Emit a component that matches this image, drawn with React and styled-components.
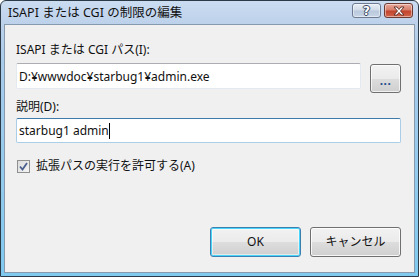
import React from "react";
import styled, { createGlobalStyle } from "styled-components";

const FONT = `"Noto Sans", "Noto Sans CJK JP", sans-serif`;

const Global = createGlobalStyle`
  html, body { margin: 0; padding: 0; background: #ffffff; }
  body { font-family: ${FONT}; }
`;

const Window = styled.div`
  width: 419px;
  height: 277px;
  box-sizing: border-box;
  border: 1px solid #2c3a48;
  border-radius: 6px 6px 0 0;
  background: linear-gradient(to bottom, #cbdcf1 0px, #bcd1ea 24px, #a9cbea 60px, #7fc9ef 100%);
  display: flex;
  flex-direction: column;
  padding: 0 3px 3px 3px;
  font-family: ${FONT};
`;

const TitleBar = styled.div`
  height: 23px;
  display: flex;
  align-items: center;
  padding-left: 4px;
  padding-right: 2px;
`;

const Title = styled.div`
  flex: 1;
  font-size: 12.5px;
  color: #111;
  line-height: 16px;
  margin-top: 1px;
`;

const CapButton = styled.div`
  width: 29px;
  height: 15px;
  margin-left: ${(p) => (p.$close ? 3 : 0)}px;
  margin-top: -4px;
  border: 1px solid ${(p) => (p.$close ? "#6b3b33" : "#6c7b92")};
  border-radius: 3px;
  box-sizing: border-box;
  background: ${(p) =>
    p.$close
      ? "linear-gradient(to bottom, #e9ab9e 0%, #d77e6b 45%, #c2442d 55%, #d0644a 100%)"
      : "linear-gradient(to bottom, #e8eef6 0%, #d2dce9 45%, #b9c8dc 55%, #c9d6e6 100%)"};
  display: flex;
  align-items: center;
  justify-content: center;
  box-shadow: inset 0 0 0 1px rgba(255, 255, 255, 0.45);
`;

const Panel = styled.div`
  flex: 1;
  background: #f0f0f0;
  border: 1px solid #8799ad;
  display: flex;
  flex-direction: column;
  padding: 0 13px 0 11px;
`;

const Label = styled.div`
  font-size: 12px;
  line-height: 16px;
  color: #111;
  margin-top: ${(p) => p.$top}px;
`;

const Row = styled.div`
  display: flex;
  align-items: flex-start;
  margin-top: ${(p) => p.$top}px;
`;

const TextBox = styled.div`
  flex: 1;
  height: ${(p) => p.$h}px;
  box-sizing: border-box;
  background: #fff;
  border: 1px solid ${(p) => (p.$focus ? "#aacde8" : "#e3e9ef")};
  border-top-color: ${(p) => (p.$focus ? "#3d7bad" : "#abadb3")};
  border-radius: 2px;
  font-size: 12px;
  color: #111;
  padding-left: 2px;
  display: flex;
  align-items: center;
  white-space: nowrap;
`;

const Caret = styled.span`
  display: inline-block;
  width: 1px;
  height: 16px;
  background: #000;
`;

const Browse = styled.button`
  width: 31px;
  height: 29px;
  margin-left: 9px;
  margin-top: 1px;
  box-sizing: border-box;
  border: 1px solid #707070;
  border-radius: 3px;
  background: linear-gradient(to bottom, #f2f2f2 0%, #ebebeb 50%, #dddddd 51%, #cfcfcf 100%);
  box-shadow: inset 0 0 0 1px rgba(255, 255, 255, 0.7);
  padding: 3px 0 0 0;
  display: flex;
  align-items: center;
  justify-content: center;
  color: #1c4c8c;
  font-family: "Noto Sans", sans-serif;
  font-size: 12px;
  font-weight: bold;
  letter-spacing: 0.5px;
`;

const CheckRow = styled.div`
  display: flex;
  align-items: center;
  margin-top: 15px;
  margin-left: 1px;
`;

const CheckBox = styled.div`
  width: 13px;
  height: 13px;
  box-sizing: border-box;
  border: 1px solid #8e8f8f;
  background: linear-gradient(135deg, #dcdcdc 0%, #f4f4f4 100%);
  display: flex;
  align-items: center;
  justify-content: center;
`;

const CheckLabel = styled.div`
  font-size: 12px;
  line-height: 16px;
  color: #111;
  margin-left: 6px;
`;

const Footer = styled.div`
  margin-top: auto;
  margin-bottom: 15px;
  display: flex;
  justify-content: flex-end;
  gap: 9px;
`;

const DlgButton = styled.button`
  width: 91px;
  height: 30px;
  box-sizing: border-box;
  border: 1px solid ${(p) => (p.$default ? "#3c7fb1" : "#707070")};
  border-radius: 3px;
  background: linear-gradient(to bottom, #f2f2f2 0%, #ebebeb 50%, #dddddd 51%, #cfcfcf 100%);
  box-shadow: ${(p) =>
    p.$default
      ? "inset 0 0 0 1px #48d5f9, inset 0 0 0 2px rgba(255,255,255,0.5)"
      : "inset 0 0 0 1px rgba(255,255,255,0.8)"};
  font-family: ${FONT};
  font-size: 12px;
  color: #111;
  padding: 0;
  line-height: 16px;
`;

const HelpGlyph = styled.span`
  font-family: "DejaVu Sans", sans-serif;
  font-weight: bold;
  font-size: 12px;
  line-height: 12px;
  color: #ffffff;
  text-shadow: 0 0 1px #3b4a62, 1px 0 0 #3b4a62, -1px 0 0 #3b4a62, 0 1px 0 #3b4a62, 0 -1px 0 #3b4a62;
`;

export default function App() {
  return (
    <>
      <Global />
      <Window>
        <TitleBar>
          <Title>ISAPI または CGI の制限の編集</Title>
          <CapButton>
            <HelpGlyph>?</HelpGlyph>
          </CapButton>
          <CapButton $close>
            <svg width="14" height="10" viewBox="0 0 14 10">
              <path
                d="M2 1 L5 1 L7 3.5 L9 1 L12 1 L8.5 5 L12 9 L9 9 L7 6.5 L5 9 L2 9 L5.5 5 Z"
                fill="#ffffff"
                stroke="#5a2a22"
                strokeWidth="0.9"
                strokeLinejoin="round"
              />
            </svg>
          </CapButton>
        </TitleBar>
        <Panel>
          <Label $top={17}>ISAPI または CGI パス(I):</Label>
          <Row $top={5}>
            <TextBox $h={26}>D:¥wwwdoc¥starbug1¥admin.exe</TextBox>
            <Browse>...</Browse>
          </Row>
          <Label $top={6}>説明(D):</Label>
          <Row $top={3}>
            <TextBox $h={25} $focus>
              starbug1 admin
              <Caret />
            </TextBox>
          </Row>
          <CheckRow>
            <CheckBox>
              <svg width="9" height="9" viewBox="0 0 9 9">
                <path d="M1 4.5 L3.5 7.5 L8 1" fill="none" stroke="#4a5f8e" strokeWidth="1.8" />
              </svg>
            </CheckBox>
            <CheckLabel>拡張パスの実行を許可する(A)</CheckLabel>
          </CheckRow>
          <Footer>
            <DlgButton $default>OK</DlgButton>
            <DlgButton>キャンセル</DlgButton>
          </Footer>
        </Panel>
      </Window>
    </>
  );
}
